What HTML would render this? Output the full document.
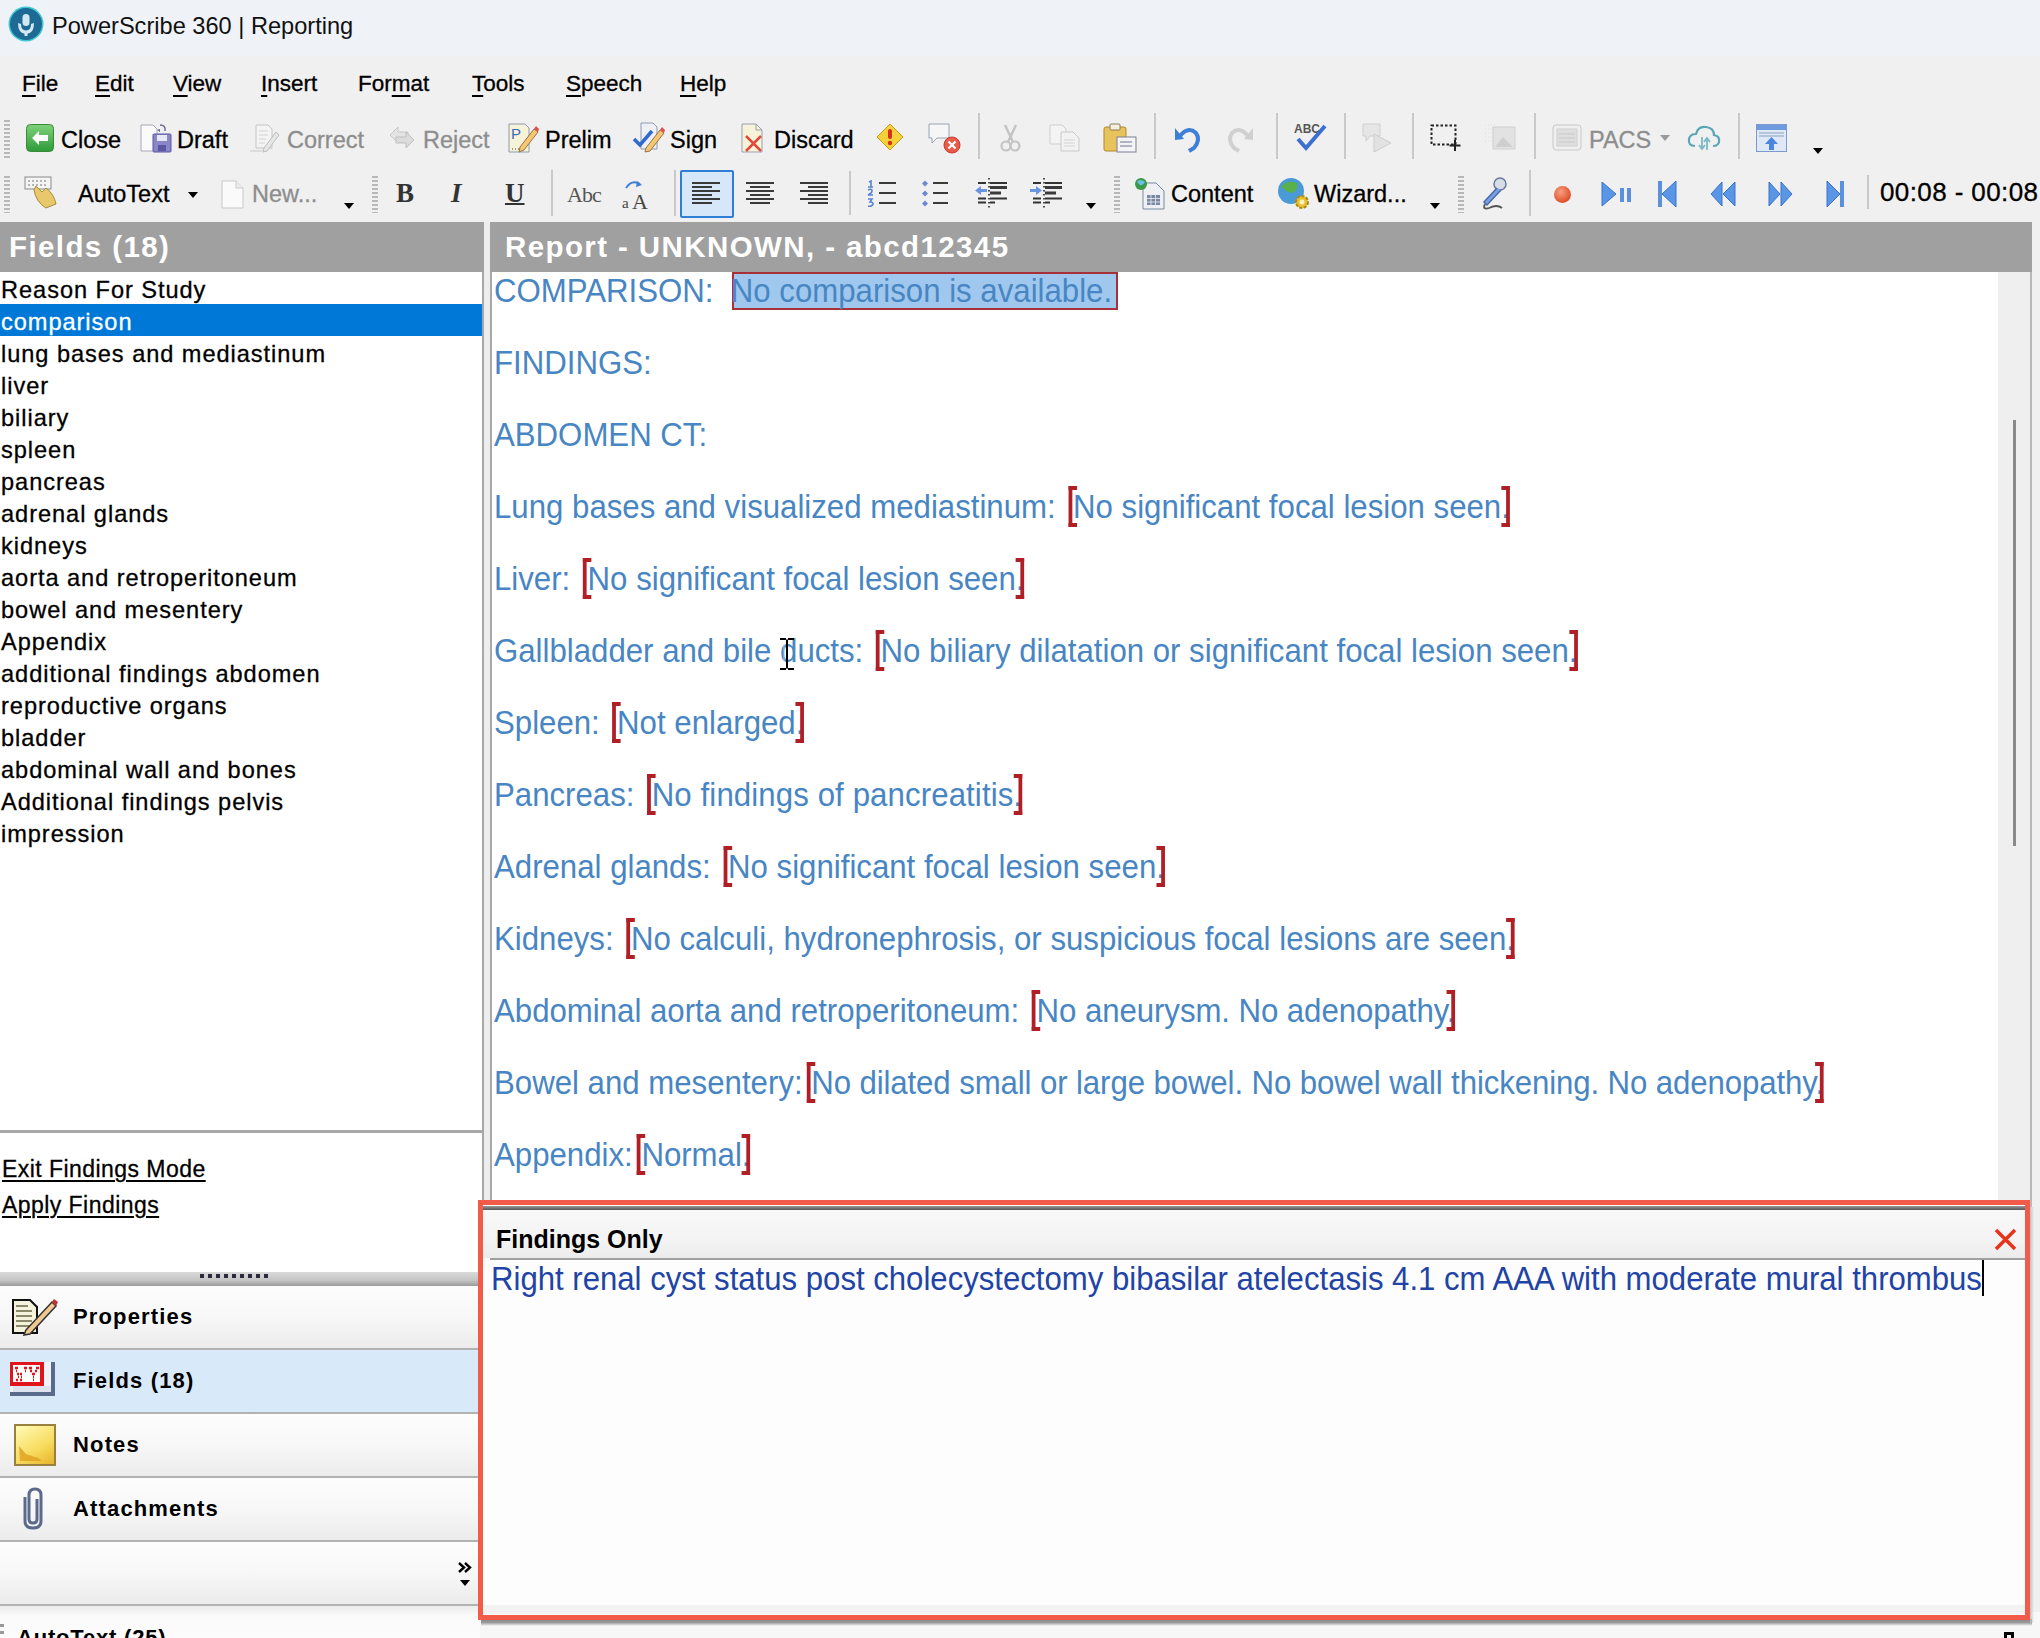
<!DOCTYPE html>
<html><head><meta charset="utf-8">
<style>
*{margin:0;padding:0;box-sizing:border-box}
html,body{width:2040px;height:1638px;overflow:hidden;background:#f0f0f0;font-family:"Liberation Sans",sans-serif;color:#000;position:relative}
.a{position:absolute;white-space:nowrap}
svg{position:absolute;overflow:visible}
.mi{position:absolute;top:71px;font-size:22.5px;-webkit-text-stroke:0.3px currentColor;color:#000;white-space:nowrap}
.mi u{text-decoration:underline;text-decoration-thickness:2px;text-underline-offset:4px}
.tt{position:absolute;font-size:23.5px;-webkit-text-stroke:0.3px currentColor;color:#000;white-space:nowrap;line-height:28px}
.t1{top:126px}
.t2{top:180px}
.dis{color:#8d8d8d}
.sep{position:absolute;width:2px;background:#c9c9c9}
.grip{position:absolute;width:6px;background:repeating-linear-gradient(#b8b8b8 0 2px,transparent 2px 4px)}
.arr{position:absolute;width:0;height:0;border-left:5px solid transparent;border-right:5px solid transparent;border-top:6px solid #000}
.hdr{position:absolute;background:#a0a0a0;color:#fff;font-weight:bold;font-size:29.5px;height:50px;line-height:50px;white-space:nowrap;letter-spacing:1.4px}
.li{position:absolute;left:1px;margin-top:1.5px;font-size:23.6px;-webkit-text-stroke:0.3px currentColor;height:32px;line-height:32px;color:#000;white-space:nowrap;letter-spacing:0.95px}
.rl{position:absolute;left:494.2px;margin-top:1.2px;font-size:33px;color:#4886c3;line-height:36px;height:36px;white-space:pre;transform:scaleX(0.945);transform-origin:0 0}
.f{position:relative}
.f::before,.f::after{content:"";box-sizing:border-box;position:absolute;top:-2px;height:41px;width:9px;border:4px solid #b01e26;border-width:4px 0 4px 0}
.f::before{left:-5px;border-left:4.2px solid #b01e26}
.f::after{right:0px;border-right:4.2px solid #b01e26}
.nav{position:absolute;left:0;width:480px;height:64px;border-bottom:2px solid #b2b2b2;background:linear-gradient(#fdfdfd 0%,#f7f7f7 50%,#ececec 100%)}
.nv{position:absolute;left:73px;margin-top:2px;font-size:22px;font-weight:bold;white-space:nowrap;letter-spacing:1.15px}
</style></head><body>
<!-- title bar -->
<div class="a" style="left:0;top:0;width:2040px;height:56px;background:#eff3f8"></div>
<div class="a" style="left:10px;top:8px;width:32px;height:32px;border-radius:50%;background:#1d6a95;box-shadow:0 0 0 1.5px #3fc6d3"></div>
<svg style="left:10px;top:8px" width="32" height="32" viewBox="0 0 32 32"><rect x="12.5" y="6" width="7" height="12" rx="3.5" fill="#d2e8f4"/><path d="M8 15 Q8 26 16 26 Q24 26 24 15 L21 16 Q21 22.5 16 22.5 Q11 22.5 11 16Z" fill="#d2e8f4"/><rect x="14.5" y="25" width="3" height="3" fill="#d2e8f4"/></svg>
<div class="a" style="left:52px;top:12.5px;font-size:23.6px;color:#111">PowerScribe 360 | Reporting</div>
<!-- menu -->
<div class="mi" style="left:22px"><u>F</u>ile</div>
<div class="mi" style="left:95px"><u>E</u>dit</div>
<div class="mi" style="left:173px"><u>V</u>iew</div>
<div class="mi" style="left:261px"><u>I</u>nsert</div>
<div class="mi" style="left:358px">For<u>m</u>at</div>
<div class="mi" style="left:472px"><u>T</u>ools</div>
<div class="mi" style="left:566px"><u>S</u>peech</div>
<div class="mi" style="left:680px"><u>H</u>elp</div>
<!-- toolbar 1 -->
<div class="grip" style="left:4px;top:120px;height:38px"></div>
<svg style="left:26px;top:124px" width="28" height="28" viewBox="0 0 28 28"><defs><linearGradient id="gG" x1="0" y1="0" x2="0" y2="1"><stop offset="0" stop-color="#7fd27a"/><stop offset="1" stop-color="#2f9a3a"/></linearGradient></defs><rect x="0.5" y="0.5" width="27" height="27" rx="4" fill="url(#gG)" stroke="#3a8a3a"/><path d="M6 14 L13 7 L13 11 L22 11 L22 17 L13 17 L13 21Z" fill="#fff"/></svg>
<div class="tt t1" style="left:61px">Close</div>
<svg style="left:140px;top:122px" width="32" height="32" viewBox="0 0 32 32"><path d="M1 3 H13 L17 7 V29 H1Z" fill="#fafafa" stroke="#a8a8b8"/><rect x="13" y="12" width="18" height="18" rx="1" fill="#8a86c8" stroke="#5a57a0"/><rect x="17" y="13" width="10" height="6" fill="#e8e8f4"/><rect x="18" y="23" width="8" height="6" fill="#5a57a0"/><path d="M20 3 q6 0 5 6" stroke="#6a6a8a" stroke-width="1.5" fill="none"/><path d="M17 8 l3 -1 l0 3z" fill="#6a6a8a"/></svg>
<div class="tt t1" style="left:177px">Draft</div>
<svg style="left:250px;top:124px" width="30" height="28" viewBox="0 0 30 28"><path d="M6 1 H18 L22 5 V24 H6Z" fill="#f4f4f4" stroke="#c4c4c4"/><path d="M9 7h9M9 11h9M9 15h7M9 19h6" stroke="#cfcfcf"/><path d="M14 24 L26 8 L29 11 L17 27 L13 28Z" fill="#e6e6e6" stroke="#bdbdbd"/><path d="M0 27h12" stroke="#c8c8c8"/></svg>
<div class="tt t1 dis" style="left:287px">Correct</div>
<svg style="left:386px;top:123px" width="31" height="29" viewBox="0 0 31 29"><path d="M4 12 L12 4 L12 9 L22 9 L22 15 L12 15 L12 20Z" fill="#e4e4e4" stroke="#c8c8c8"/><path d="M28 17 L20 9 L20 14 L10 14 L10 20 L20 20 L20 25Z" fill="#dcdcdc" stroke="#bfbfbf"/></svg>
<div class="tt t1 dis" style="left:423px">Reject</div>
<svg style="left:508px;top:123px" width="31" height="30" viewBox="0 0 31 30"><path d="M1 1 H17 L21 5 V29 H1Z" fill="#f6f3d8" stroke="#8c9ab0"/><text x="3" y="16" font-family="Liberation Sans" font-size="15" fill="#3a6cc0">P</text><path d="M4 26h1M7 26h1M10 26h1" stroke="#333"/><path d="M12 24 L26 6 L30 9 L16 27 L11 29Z" fill="#f2c870" stroke="#a0704a"/><path d="M26 6 L28 3 L31 6 L30 9Z" fill="#e05050"/></svg>
<div class="tt t1" style="left:545px">Prelim</div>
<svg style="left:633px;top:122px" width="32" height="31" viewBox="0 0 32 31"><path d="M8 1 H20 L24 5 V27 H8Z" fill="#eef0f6" stroke="#8c9ab0"/><path d="M1 17 L7 23 L19 9" stroke="#2f6ad0" stroke-width="3.5" fill="none"/><path d="M13 26 L27 8 L31 11 L17 29 L12 30Z" fill="#f2c870" stroke="#a0704a"/><path d="M27 8 L29 5 L32 8 L31 11Z" fill="#e05050"/></svg>
<div class="tt t1" style="left:670px">Sign</div>
<svg style="left:741px;top:123px" width="24" height="30" viewBox="0 0 24 30"><path d="M1 1 H15 L21 7 V29 H1Z" fill="#f6f3d8" stroke="#98a0b0"/><path d="M15 1 V7 H21" fill="none" stroke="#98a0b0"/><path d="M5 13 L20 28 M20 13 L5 28" stroke="#e04a3a" stroke-width="2.5"/></svg>
<div class="tt t1" style="left:774px">Discard</div>
<svg style="left:876px;top:123px" width="28" height="28" viewBox="0 0 28 28"><path d="M14 1 L27 14 L14 27 L1 14Z" fill="#f6d23a" stroke="#c89a1a"/><rect x="12" y="6" width="4" height="10" rx="2" fill="#d8301a"/><circle cx="14" cy="20" r="2.2" fill="#d8301a"/></svg>
<svg style="left:927px;top:122px" width="34" height="32" viewBox="0 0 34 32"><path d="M2 2 H22 V16 H10 L5 21 V16 H2Z" fill="#f6f6f6" stroke="#9aa4b4"/><circle cx="25" cy="23" r="8" fill="#e85a4a" stroke="#c83a2a"/><path d="M21.5 19.5 L28.5 26.5 M28.5 19.5 L21.5 26.5" stroke="#fff" stroke-width="2.2"/></svg>
<div class="sep" style="left:978px;top:113px;height:46px"></div>
<svg style="left:1000px;top:124px" width="21" height="28" viewBox="0 0 21 28"><path d="M5 1 L13 18 M16 1 L8 18" stroke="#c4c4c4" stroke-width="2.5"/><circle cx="6" cy="22" r="4.5" fill="none" stroke="#c4c4c4" stroke-width="2.2"/><circle cx="15" cy="22" r="4.5" fill="none" stroke="#c4c4c4" stroke-width="2.2"/></svg>
<svg style="left:1049px;top:124px" width="32" height="28" viewBox="0 0 32 28"><path d="M1 1 H13 L17 5 V20 H1Z" fill="#f4f4f4" stroke="#cfcfcf"/><path d="M12 8 H24 L30 14 V27 H12Z" fill="#f2f2f2" stroke="#c8c8c8"/><path d="M15 16h11M15 19h11M15 22h11" stroke="#d4d4d4"/></svg>
<svg style="left:1103px;top:123px" width="34" height="30" viewBox="0 0 34 30"><rect x="1" y="4" width="22" height="24" rx="2" fill="#e8c25a" stroke="#b08a2a"/><rect x="7" y="1" width="10" height="6" rx="1" fill="#f4f0e0" stroke="#8a7a5a"/><rect x="14" y="14" width="19" height="15" fill="#f4f4f8" stroke="#7a8090"/><path d="M17 19h12M17 23h12" stroke="#9aa0b0" stroke-width="1.5"/></svg>
<div class="sep" style="left:1154px;top:113px;height:46px"></div>
<svg style="left:1174px;top:124px" width="27" height="28" viewBox="0 0 27 28"><path d="M6 12 Q14 2 22 9 Q27 16 20 24 L15 27" stroke="#3c7fd8" stroke-width="4" fill="none"/><path d="M1 4 L10 15 L1 16Z" fill="#3c7fd8"/></svg>
<svg style="left:1227px;top:124px" width="27" height="28" viewBox="0 0 27 28"><path d="M21 12 Q13 2 5 9 Q0 16 7 24 L12 27" stroke="#d0d0d0" stroke-width="4" fill="none"/><path d="M26 4 L17 15 L26 16Z" fill="#d0d0d0"/></svg>
<div class="sep" style="left:1276px;top:113px;height:46px"></div>
<svg style="left:1293px;top:121px" width="34" height="32" viewBox="0 0 34 32"><text x="1" y="12" font-family="Liberation Sans" font-size="12" font-weight="bold" fill="#555">ABC</text><path d="M5 18 L13 27 L32 5" stroke="#3c6fd0" stroke-width="4" fill="none"/></svg>
<div class="sep" style="left:1344px;top:113px;height:46px"></div>
<svg style="left:1362px;top:122px" width="30" height="32" viewBox="0 0 30 32"><path d="M1 2 H18 V14 H8 L4 19 V14 H1Z" fill="#e6e6e6" stroke="#cfcfcf"/><path d="M12 12 L12 30 L29 21Z" fill="#e2e2e2" stroke="#cdcdcd"/></svg>
<div class="sep" style="left:1412px;top:113px;height:46px"></div>
<svg style="left:1430px;top:124px" width="31" height="27" viewBox="0 0 31 27"><rect x="1.5" y="1.5" width="24" height="19" fill="none" stroke="#222" stroke-width="2" stroke-dasharray="2.5 2"/><path d="M25 16 V27 M19.5 21.5 H30.5" stroke="#222" stroke-width="2"/></svg>
<svg style="left:1484px;top:124px" width="32" height="26" viewBox="0 0 32 26"><path d="M1 1h10M1 5h10M1 9h10M1 13h10M1 17h10" stroke="#ddd" stroke-dasharray="1 2"/><rect x="9" y="3" width="22" height="22" fill="#e2e2e2" stroke="#d0d0d0"/><path d="M11 23 L19 13 L29 23Z" fill="#cfcfcf"/></svg>
<div class="sep" style="left:1534px;top:113px;height:46px"></div>
<svg style="left:1552px;top:124px" width="30" height="27" viewBox="0 0 30 27"><rect x="1" y="1" width="28" height="25" rx="3" fill="#efefef" stroke="#c8c8c8"/><rect x="5" y="5" width="20" height="17" fill="#dedede" stroke="#cfcfcf"/><path d="M7 10h16M7 14h16M7 18h16" stroke="#c9c9c9"/></svg>
<div class="tt t1 dis" style="left:1589px">PACS</div>
<div class="arr" style="left:1660px;top:135px;border-top-color:#9a9a9a"></div>
<svg style="left:1687px;top:124px" width="34" height="28" viewBox="0 0 34 28"><path d="M8 22 Q1 22 2 15 Q3 10 9 10 Q11 2 19 3 Q27 4 27 11 Q33 12 32 18 Q31 22 26 22" fill="none" stroke="#5aa6b8" stroke-width="2.2"/><path d="M15 13 V24 M12 21 L15 25 L18 21 M20 26 V15 M17 18 L20 14 L23 18" stroke="#7ab8c8" stroke-width="1.8" fill="none"/></svg>
<div class="sep" style="left:1738px;top:113px;height:46px"></div>
<svg style="left:1756px;top:124px" width="31" height="28" viewBox="0 0 31 28"><rect x="0.5" y="0.5" width="30" height="27" fill="#dfe8f6" stroke="#7a9ad0"/><rect x="1" y="1" width="29" height="5" fill="#6f9ae0"/><path d="M3 9h25M3 12h25" stroke="#a8b8d0" stroke-width="1.5"/><path d="M15.5 13 L9 20 H13 V26 H18 V20 H22Z" fill="#4a86e0"/></svg>
<div class="arr" style="left:1813px;top:148px"></div>

<!-- toolbar 2 -->
<div class="grip" style="left:4px;top:176px;height:37px"></div>
<svg style="left:24px;top:176px" width="34" height="34" viewBox="0 0 34 34"><rect x="1" y="1" width="26" height="12" fill="#f4f4f4" stroke="#8a8a8a"/><path d="M4 5h2M8 5h2M12 5h2M16 5h2M20 5h2M4 9h2M8 9h2M12 9h2M16 9h2M20 9h2" stroke="#777"/><path d="M10 14 Q12 26 22 32 L32 28 Q30 18 22 12 L18 16 L12 10Z" fill="#e8c86a" stroke="#a48a3a"/></svg>
<div class="tt t2" style="left:78px">AutoText</div>
<div class="arr" style="left:188px;top:192px"></div>
<svg style="left:221px;top:180px" width="23" height="29" viewBox="0 0 23 29"><path d="M1 1 H15 L22 8 V28 H1Z" fill="#fafafa" stroke="#c8c8c8"/><path d="M15 1 V8 H22" fill="#eee" stroke="#c8c8c8"/></svg>
<div class="tt t2 dis" style="left:252px">New...</div>
<div class="arr" style="left:344px;top:203px"></div>
<div class="grip" style="left:372px;top:176px;height:37px"></div>
<div class="a" style="left:396px;top:178px;font-family:'Liberation Serif',serif;font-weight:bold;font-size:27px;color:#333">B</div>
<div class="a" style="left:451px;top:178px;font-family:'Liberation Serif',serif;font-style:italic;font-weight:bold;font-size:27px;color:#333">I</div>
<div class="a" style="left:505px;top:178px;font-family:'Liberation Serif',serif;font-weight:bold;font-size:27px;color:#333;text-decoration:underline;text-decoration-thickness:2px">U</div>
<div class="sep" style="left:551px;top:170px;height:46px"></div>
<div class="a" style="left:567px;top:182px;font-family:'Liberation Serif',serif;font-size:22px;color:#555;letter-spacing:-1px">Abc</div>
<svg style="left:622px;top:178px" width="31" height="33" viewBox="0 0 31 33"><path d="M4 10 Q10 1 18 6" stroke="#3c7fd8" stroke-width="2" fill="none"/><path d="M15 3 L20 7 L14 9Z" fill="#3c7fd8"/><text x="0" y="30" font-family="Liberation Serif" font-size="15" fill="#444">a</text><text x="10" y="31" font-family="Liberation Serif" font-size="22" fill="#444">A</text></svg>
<div class="sep" style="left:674px;top:170px;height:46px"></div>
<div class="a" style="left:680px;top:170px;width:54px;height:48px;background:#d5e7f8;border:2px solid #2f7fd8;border-radius:2px"></div>
<svg style="left:692px;top:181px" width="30" height="24" viewBox="0 0 30 24"><path d="M0 2h28M0 6h20M0 10h28M0 14h20M0 18h28M0 22h20" stroke="#3a3a3a" stroke-width="2"/></svg>
<svg style="left:746px;top:181px" width="30" height="24" viewBox="0 0 30 24"><path d="M0 2h28M4 6h20M0 10h28M4 14h20M0 18h28M4 22h20" stroke="#3a3a3a" stroke-width="2"/></svg>
<svg style="left:800px;top:181px" width="30" height="24" viewBox="0 0 30 24"><path d="M0 2h28M8 6h20M0 10h28M8 14h20M0 18h28M8 22h20" stroke="#3a3a3a" stroke-width="2"/></svg>
<div class="sep" style="left:849px;top:171px;height:44px"></div>
<svg style="left:867px;top:180px" width="30" height="27" viewBox="0 0 30 27"><path d="M2 2 l2 -1 v6 M1 7h5 M1 10 q4 -2 4 1 q0 2 -4 4 h5 M1 19 h4 l-2 3 q3 0 3 2 q-1 3 -5 2" stroke="#5a84d0" stroke-width="1.6" fill="none"/><path d="M12 3h17M12 13h17M12 23h17" stroke="#3a3a3a" stroke-width="2.2"/></svg>
<svg style="left:921px;top:180px" width="28" height="27" viewBox="0 0 28 27"><path d="M4 0.5 L7 3.5 L4 6.5 L1 3.5Z M4 10.5 L7 13.5 L4 16.5 L1 13.5Z M4 20.5 L7 23.5 L4 26.5 L1 23.5Z" fill="#6a8ad0"/><path d="M12 3h15M12 13h15M12 23h15" stroke="#3a3a3a" stroke-width="2.2"/></svg>
<svg style="left:975px;top:177px" width="32" height="32" viewBox="0 0 32 32"><path d="M3 6h8M15 6h17M3 21.5h8M15 21.5h17M3 25.5h8M15 25.5h5" stroke="#333" stroke-width="2"/><path d="M15 10.5h17M15 16h11" stroke="#3a3a3a" stroke-width="3.2"/><path d="M14 1v30" stroke="#222" stroke-width="1.6" stroke-dasharray="1.6 2.4"/><path d="M0 13.5 L6 9 V18Z" fill="#6a96e0"/><path d="M5 13.5h7" stroke="#6a96e0" stroke-width="3"/></svg>
<svg style="left:1030px;top:177px" width="32" height="32" viewBox="0 0 32 32"><path d="M3 6h8M15 6h17M3 21.5h8M15 21.5h17M3 25.5h8M15 25.5h5" stroke="#333" stroke-width="2"/><path d="M15 10.5h17M15 16h11" stroke="#3a3a3a" stroke-width="3.2"/><path d="M14 1v30" stroke="#222" stroke-width="1.6" stroke-dasharray="1.6 2.4"/><path d="M12 13.5 L6 9 V18Z" fill="#6a96e0"/><path d="M0 13.5h7" stroke="#6a96e0" stroke-width="3"/></svg>
<div class="arr" style="left:1086px;top:203px"></div>
<div class="grip" style="left:1114px;top:176px;height:37px"></div>
<svg style="left:1134px;top:177px" width="33" height="33" viewBox="0 0 33 33"><path d="M9 6 H22 L30 14 V32 H9Z" fill="#eef0f4" stroke="#7a8aa0"/><rect x="13" y="18" width="13" height="10" fill="#7a8aa0"/><path d="M13 21.5h13M13 25h13M17 18v10M21.5 18v10" stroke="#eef" stroke-width="0.8"/><circle cx="7" cy="7" r="6" fill="#3a9a4a"/><path d="M3 5 q3 -4 8 0 q-2 4 -5 3z" fill="#6ac0e8"/></svg>
<div class="tt t2" style="left:1171px">Content</div>
<svg style="left:1277px;top:177px" width="35" height="34" viewBox="0 0 35 34"><circle cx="14" cy="14" r="13" fill="#4a9ad8"/><path d="M4 10 q6 -8 16 -4 q2 8 -6 10 q-6 -2 -10 -6z" fill="#5ab04a"/><path d="M20 20 q4 6 0 10" fill="#5ab04a"/><circle cx="25" cy="25" r="6" fill="#e8c030" stroke="#a88a10" stroke-width="2" stroke-dasharray="3 1.5"/><circle cx="25" cy="25" r="2.5" fill="#f8f0c0"/></svg>
<div class="tt t2" style="left:1314px">Wizard...</div>
<div class="arr" style="left:1430px;top:203px"></div>
<div class="grip" style="left:1458px;top:176px;height:37px"></div>
<svg style="left:1480px;top:177px" width="27" height="33" viewBox="0 0 27 33"><circle cx="20" cy="7" r="6" fill="#d8dde6" stroke="#6a7a9a" stroke-width="1.5"/><path d="M17 11 L4 25 L7 28 L21 13" fill="#7aa0e0" stroke="#4a6ab0" stroke-width="1.5"/><path d="M5 27 Q2 33 9 31 Q17 27 22 31" stroke="#555" stroke-width="1.8" fill="none"/></svg>
<div class="sep" style="left:1529px;top:170px;height:46px"></div>
<div class="a" style="left:1554px;top:186px;width:17px;height:17px;border-radius:50%;background:radial-gradient(circle at 40% 35%,#f6a080,#e0502c 70%)"></div>
<svg style="left:1601px;top:180px" width="31" height="28" viewBox="0 0 31 28"><path d="M1 2 L15 14 L1 26Z" fill="#5a96e6" stroke="#3a72c8"/><rect x="19" y="8" width="4" height="14" fill="#5a90dc"/><rect x="26" y="8" width="4" height="14" fill="#5a90dc"/></svg>
<svg style="left:1658px;top:180px" width="19" height="28" viewBox="0 0 19 28"><rect x="0" y="1" width="4" height="26" fill="#5a90dc"/><path d="M18 1 L4 14 L18 27Z" fill="#5a96e6" stroke="#3a72c8"/></svg>
<svg style="left:1710px;top:181px" width="26" height="26" viewBox="0 0 26 26"><path d="M12 1 L1 13 L12 25Z M25 1 L13 13 L25 25Z" fill="#5a96e6" stroke="#3a72c8"/></svg>
<svg style="left:1768px;top:181px" width="26" height="26" viewBox="0 0 26 26"><path d="M1 1 L12 13 L1 25Z M13 1 L24 13 L13 25Z" fill="#5a96e6" stroke="#3a72c8"/></svg>
<svg style="left:1826px;top:180px" width="19" height="28" viewBox="0 0 19 28"><path d="M1 1 L14 14 L1 27Z" fill="#5a96e6" stroke="#3a72c8"/><rect x="14" y="1" width="4" height="26" fill="#5a90dc"/></svg>
<div class="sep" style="left:1867px;top:175px;height:34px"></div>
<div class="tt t2" style="left:1880px;font-size:26px;letter-spacing:0.4px;top:177.5px">00:08 - 00:08</div>
<!-- left panel -->
<div class="a" style="left:0;top:222px;width:484px;height:1416px;background:#fff"></div>
<div class="hdr" style="left:0;top:222px;width:484px;padding-left:9px">Fields (18)</div>
<div class="a" style="left:482px;top:272px;width:2px;height:935px;background:#a8a8a8"></div>
<div class="a" style="left:484px;top:222px;width:6px;height:1000px;background:#ededed"></div>
<div class="a" style="left:0;top:304px;width:482px;height:32px;background:#0078d7"></div>
<div class="li" style="top:272px">Reason For Study</div>
<div class="li" style="top:304px;color:#fff">comparison</div>
<div class="li" style="top:336px">lung bases and mediastinum</div>
<div class="li" style="top:368px">liver</div>
<div class="li" style="top:400px">biliary</div>
<div class="li" style="top:432px">spleen</div>
<div class="li" style="top:464px">pancreas</div>
<div class="li" style="top:496px">adrenal glands</div>
<div class="li" style="top:528px">kidneys</div>
<div class="li" style="top:560px">aorta and retroperitoneum</div>
<div class="li" style="top:592px">bowel and mesentery</div>
<div class="li" style="top:624px">Appendix</div>
<div class="li" style="top:656px">additional findings abdomen</div>
<div class="li" style="top:688px">reproductive organs</div>
<div class="li" style="top:720px">bladder</div>
<div class="li" style="top:752px">abdominal wall and bones</div>
<div class="li" style="top:784px">Additional findings pelvis</div>
<div class="li" style="top:816px">impression</div>
<div class="a" style="left:0;top:1130px;width:484px;height:3px;background:#a8a8a8"></div>
<div class="a" style="left:2px;top:1156px;font-size:23px;letter-spacing:0.45px;-webkit-text-stroke:0.3px #000;text-decoration:underline;text-underline-offset:3px;text-decoration-thickness:2px;color:#000">Exit Findings Mode</div>
<div class="a" style="left:2px;top:1192px;font-size:23px;letter-spacing:0.45px;-webkit-text-stroke:0.3px #000;text-decoration:underline;text-underline-offset:3px;text-decoration-thickness:2px;color:#000">Apply Findings</div>
<!-- splitter -->
<div class="a" style="left:0;top:1272px;width:484px;height:14px;background:linear-gradient(#dadada,#c4c4c4 60%,#9a9a9a)"></div>
<div class="a" style="left:200px;top:1274px;width:70px;height:4px;background:repeating-linear-gradient(90deg,#2a2a3a 0 4px,transparent 4px 8px)"></div>
<!-- nav -->
<div class="nav" style="top:1286px"></div>
<div class="nav" style="top:1350px;background:#d8e9f9"></div>
<div class="nav" style="top:1414px"></div>
<div class="nav" style="top:1478px"></div>
<div class="nav" style="top:1542px"></div>
<div class="a" style="left:0;top:1606px;width:480px;height:32px;background:linear-gradient(#ececec,#fafafa 30%,#fcfcfc)"></div>
<svg style="left:12px;top:1296px" width="46" height="40" viewBox="0 0 46 40"><path d="M1 4 H18 L25 11 V37 H1Z" fill="#f6f3dc" stroke="#111" stroke-width="2"/><path d="M4 10h12M4 15h16M4 20h16M4 25h16M4 30h16" stroke="#8a8a6a" stroke-width="2"/><path d="M14 34 L40 6 L44 10 L18 38 L12 39Z" fill="#f0c890" stroke="#333" stroke-width="1.5"/><path d="M40 6 L42 3 L46 6 L44 10Z" fill="#c03030"/></svg>
<div class="nv" style="top:1302px">Properties</div>
<svg style="left:10px;top:1362px" width="46" height="35" viewBox="0 0 46 35"><rect x="0" y="0" width="45" height="34" fill="#f0f2f8"/><rect x="41" y="0" width="4" height="34" fill="#5a6a8a"/><rect x="0" y="30" width="45" height="4" fill="#5a6a8a"/><rect x="3" y="24" width="38" height="6" fill="#dde2ee"/><rect x="0" y="0" width="34" height="24" fill="#e0141a"/><rect x="3" y="3" width="27" height="17" fill="#fff"/><path d="M5 6h3M14 6h3M6 9h1M15 9h1M7 12h2M10 12h2M8 15h1M11 15h1M6 18h2M10 18h2M19 6h3M26 6h3M20 9h2M25 9h2M22 12h3M23 15h1M23 18h1" stroke="#e0141a" stroke-width="2.6"/></svg>
<div class="nv" style="top:1366px">Fields (18)</div>
<svg style="left:14px;top:1424px" width="42" height="42" viewBox="0 0 42 42"><defs><linearGradient id="nG" x1="0.2" y1="0" x2="0.8" y2="1"><stop offset="0" stop-color="#fff8b0"/><stop offset="0.6" stop-color="#f8dc60"/><stop offset="1" stop-color="#e8b830"/></linearGradient></defs><rect x="1" y="1" width="40" height="40" fill="url(#nG)" stroke="#9a8040" stroke-width="2"/><path d="M5 22 L12 30 L24 34 L28 37 L6 37Z" fill="#e0a020" opacity="0.8"/></svg>
<div class="nv" style="top:1430px">Notes</div>
<svg style="left:21px;top:1487px" width="24" height="43" viewBox="0 0 24 43"><path d="M4 10 V34 Q4 41 12 41 Q20 41 20 34 V8 Q20 2 14 2 Q8 2 8 8 V32 Q8 36 12 36 Q16 36 16 32 V12" fill="none" stroke="#5a6a8a" stroke-width="3"/></svg>
<div class="nv" style="top:1494px">Attachments</div>
<svg style="left:458px;top:1562px" width="15" height="11" viewBox="0 0 15 11"><path d="M1 1 L6 5.5 L1 10 M7 1 L12 5.5 L7 10" stroke="#000" stroke-width="2.4" fill="none"/></svg>
<div class="arr" style="left:460px;top:1580px"></div>
<div class="a" style="left:17px;top:1625px;font-size:22px;font-weight:bold;letter-spacing:0.8px">AutoText (25)</div>
<div class="a" style="left:0;top:1624px;width:4px;height:14px;background:repeating-linear-gradient(#999 0 3px,transparent 3px 7px)"></div>

<!-- report panel -->
<div class="a" style="left:490px;top:222px;width:1542px;height:990px;background:#fff;border-left:2px solid #a8a8a8"></div>
<div class="a" style="left:2032px;top:222px;width:8px;height:1416px;background:#f0f0f0"></div>
<div class="a" style="left:1998px;top:272px;width:32px;height:935px;background:#efefef"></div>
<div class="a" style="left:2030px;top:272px;width:2px;height:935px;background:#b8b8b8"></div>
<div class="a" style="left:2013px;top:420px;width:3px;height:426px;background:#8a8a8a"></div>
<div class="hdr" style="left:490px;top:222px;width:1542px;padding-left:15px">Report - UNKNOWN, - abcd12345</div>
<div class="a" style="left:732px;top:272px;width:386px;height:38px;background:#a0c8ee;border:2px solid #a83038"></div>
<div class="rl" style="top:272px">COMPARISON:  No comparison is available.</div>
<div class="rl" style="top:344px">FINDINGS:</div>
<div class="rl" style="top:416px">ABDOMEN CT:</div>
<div class="rl" style="top:488px">Lung bases and visualized mediastinum:  <span class="f">No significant focal lesion seen.</span></div>
<div class="rl" style="top:560px">Liver:  <span class="f">No significant focal lesion seen.</span></div>
<div class="rl" style="top:632px">Gallbladder and bile ducts:  <span class="f">No biliary dilatation or significant focal lesion seen.</span></div>
<div class="rl" style="top:704px">Spleen:  <span class="f">Not enlarged.</span></div>
<div class="rl" style="top:776px">Pancreas:  <span class="f" style="letter-spacing:0.11px">No findings of pancreatitis.</span></div>
<div class="rl" style="top:848px">Adrenal glands:  <span class="f">No significant focal lesion seen.</span></div>
<div class="rl" style="top:920px">Kidneys:  <span class="f">No calculi, hydronephrosis, or suspicious focal lesions are seen.</span></div>
<div class="rl" style="top:992px">Abdominal aorta and retroperitoneum:  <span class="f" style="letter-spacing:-0.07px">No aneurysm. No adenopathy.</span></div>
<div class="rl" style="top:1064px">Bowel and mesentery: <span class="f" style="letter-spacing:-0.11px">No dilated small or large bowel. No bowel wall thickening. No adenopathy.</span></div>
<div class="rl" style="top:1136px">Appendix: <span class="f">Normal.</span></div>
<!-- I-beam cursor -->
<svg style="left:780px;top:638px" width="14" height="32" viewBox="0 0 14 32"><path d="M0 1h6M8 1h6M0 31h6M8 31h6" stroke="#000" stroke-width="2"/><path d="M7 1.5v29" stroke="#000" stroke-width="2"/><path d="M4 3v26" stroke="#fff" stroke-width="1" opacity="0.6"/></svg>

<!-- popup -->
<div class="a" style="left:480px;top:1612px;width:1560px;height:26px;background:#f7f7f7"></div>
<div class="a" style="left:481px;top:1619px;width:1551px;height:7px;background:linear-gradient(#858585,#9a9a9a 50%,rgba(247,247,247,0))"></div>
<div class="a" style="left:2004px;top:1632px;width:10px;height:8px;border:3px solid #000;border-bottom:none"></div>
<div class="a" style="left:2030px;top:1207px;width:4px;height:416px;background:linear-gradient(90deg,#c0c0c0,rgba(240,240,240,0))"></div>
<div class="a" style="left:478px;top:1200px;width:1552px;height:420px;border:5px solid #f25a4a;border-left-width:5.5px;background:#fbfbfb"></div>
<div class="a" style="left:483px;top:1206px;width:1542px;height:4px;background:linear-gradient(#9a9a9a,#555)"></div>
<div class="a" style="left:483px;top:1210px;width:1542px;height:48px;background:linear-gradient(#f8f8f8,#f4f4f4 60%,#ececec)"></div>
<div class="a" style="left:490px;top:1258px;width:1535px;height:2px;background:#a0a0a0"></div>
<div class="a" style="left:483px;top:1260px;width:1542px;height:354px;background:linear-gradient(#fdfdfd 0,#fdfdfd 97.5%,#f2f2f2 97.6%,#f2f2f2 100%)"></div>
<div class="a" style="left:496px;top:1224.5px;font-size:25px;font-weight:bold;letter-spacing:0px">Findings Only</div>
<svg style="left:1994px;top:1228px" width="23" height="23" viewBox="0 0 23 23"><path d="M2 2 L21 21 M21 2 L2 21" stroke="#e8321a" stroke-width="3.5"/></svg>
<div class="a" style="left:490.8px;top:1261px;font-size:33px;color:#1f44a6;line-height:36px;transform:scaleX(0.943);transform-origin:0 0">Right renal cyst status post cholecystectomy bibasilar atelectasis 4.1 cm AAA with moderate mural thrombus</div>
<div class="a" style="left:1982px;top:1260px;width:2px;height:36px;background:#000"></div>
</body></html>
